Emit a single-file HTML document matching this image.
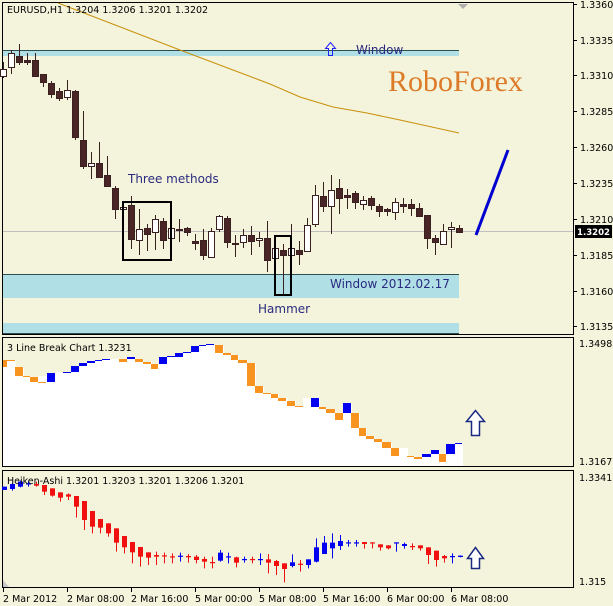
<!DOCTYPE html>
<html><head><meta charset="utf-8"><style>
html,body{margin:0;padding:0;background:#f4f4dc;width:613px;height:606px;overflow:hidden}
svg{display:block}
text{font-family:"DejaVu Sans","Liberation Sans",sans-serif;font-size:10px;fill:#000}
</style></head><body>
<svg id="s" width="613" height="606" viewBox="0 0 613 606" xmlns="http://www.w3.org/2000/svg">
<rect width="613" height="606" fill="#f4f4dc"/>
<rect x="2.5" y="2.5" width="571" height="332" fill="none" stroke="#000"/>
<rect x="2.5" y="337.5" width="571" height="129" fill="none" stroke="#000"/>
<rect x="2.5" y="470.5" width="571" height="117" fill="none" stroke="#000"/>
<rect x="3" y="50" width="456" height="6" fill="#b0dfe5"/><line x1="3" y1="50.5" x2="459" y2="50.5" stroke="#2f4f4f"/>
<rect x="3" y="274" width="456" height="24" fill="#b0dfe5"/><line x1="3" y1="274.5" x2="459" y2="274.5" stroke="#2f4f4f"/>
<rect x="3" y="323" width="456" height="10" fill="#b0dfe5"/><line x1="3" y1="333.5" x2="459" y2="333.5" stroke="#2f4f4f"/>
<line x1="3" y1="231.5" x2="573" y2="231.5" stroke="#c0c0c0"/>
<polyline points="58,3 180,50 233,70 270,84 300,97 333,107 367,113 400,120 459,133" fill="none" stroke="#c8900a" stroke-width="1"/>
<polygon points="458,4 468,4 463,9" fill="#b0b0b0"/>
<g id="candles"></g>
<line x1="476" y1="235" x2="508" y2="150" stroke="#0000d0" stroke-width="3"/>
<rect x="123" y="202" width="48" height="58" fill="none" stroke="#000" stroke-width="2"/>
<rect x="275" y="236" width="16" height="59" fill="none" stroke="#000" stroke-width="2"/>
<text x="7" y="13" style="font-size:9.5px">EURUSD,H1  1.3204 1.3206 1.3201 1.3202</text>
<text x="128" y="183" style="font-size:12px;fill:#2a2a80">Three methods</text>
<text x="258" y="313" style="font-size:12px;fill:#2a2a80">Hammer</text>
<text x="356" y="54" style="font-size:12px;fill:#2a2a80">Window</text>
<text x="330" y="288" style="font-size:12px;fill:#2a2a80">Window 2012.02.17</text>
<path d="M330.5,42.5 L325.5,48.5 L328.5,48.5 L328.5,55.5 L332.5,55.5 L332.5,48.5 L335.5,48.5 Z" fill="none" stroke="#2020ff"/>
<text x="388" y="91" style="font-family:'Liberation Serif',serif;font-size:30px;fill:#dc7a28">RoboForex</text>
<g id="axis"></g>
<rect x="575" y="225" width="37" height="13" fill="#000"/>
<text x="577" y="235" style="fill:#fff;font-weight:bold;font-size:9px" textLength="33" lengthAdjust="spacingAndGlyphs">1.3202</text>
<g id="lb" shape-rendering="crispEdges"></g>
<text x="7" y="351" style="font-size:9.5px">3 Line Break Chart 1.3231</text>
<path d="M475.5,410.5 L466.5,421.5 L471.5,421.5 L471.5,435.5 L479.5,435.5 L479.5,421.5 L484.5,421.5 Z" fill="#fff" stroke="#1a2a80" stroke-width="1.5"/>
<text x="579" y="347" style="font-size:9.5px">1.3498</text>
<text x="579" y="465" style="font-size:9.5px">1.3167</text>
<g id="ha"></g>
<text x="7" y="484" style="font-size:9.5px">Heiken-Ashi 1.3201 1.3203 1.3201 1.3206 1.3201</text>
<path d="M475.5,547.5 L467.5,558.5 L471.5,558.5 L471.5,568.5 L479.5,568.5 L479.5,558.5 L483.5,558.5 Z" fill="#fff" stroke="#1a2a80" stroke-width="1.5"/>
<text x="579" y="481" style="font-size:9.5px">1.3341</text>
<text x="579" y="585" style="font-size:9.5px">1.315</text>
<polygon points="3,580 3,587 9,587" fill="#c8c8c8"/>
<g id="dates"></g>
</svg>
<script>
var NS="http://www.w3.org/2000/svg";
function add(g,tag,a){var e=document.createElementNS(NS,tag);for(var k in a)e.setAttribute(k,a[k]);g.appendChild(e);return e;}
var C=document.getElementById("candles");
var cd=[[3,69,76,62,78,0],[11,53,67,50,74,0],[19,56,62,44,65,1],[27,60,62,53,65,1],[35,60,76,53,76,1],[43,74,82,74,87,1],[51,83,94,81,98,1],[59,91,98,88,101,1],[67,90,97,80,100,0],[75,91,137,90,140,1],[83,140,166,111,169,1],[91,163,166,152,179,0],[99,163,177,142,177,1],[107,175,186,156,186,1],[115,188,209,186,219,1],[123,207,209,206,210,0],[131,205,239,196,249,1],[139,229,240,209,255,0],[147,228,234,224,251,1],[155,219,232,215,250,0],[163,221,240,218,249,1],[171,228,238,226,243,0],[179,229,230,219,242,1],[187,228,232,227,236,1],[195,241,243,234,250,1],[203,240,255,229,260,1],[211,231,257,228,257,0],[219,216,229,215,232,0],[227,218,242,216,248,1],[235,243,244,235,257,1],[243,235,242,229,248,0],[251,235,241,226,255,1],[259,238,240,232,247,0],[267,238,260,221,272,1],[275,248,258,246,260,0],[283,250,255,244,295,1],[291,248,255,224,260,0],[299,250,254,241,265,1],[307,225,251,218,252,0],[315,195,224,185,227,0],[323,196,206,182,212,1],[331,190,206,175,234,0],[339,188,198,179,214,1],[347,195,197,189,209,1],[355,193,202,191,209,1],[363,200,204,196,210,0],[371,198,205,196,210,1],[379,206,211,204,217,1],[387,209,211,208,216,1],[395,202,212,198,220,0],[403,204,206,198,213,1],[411,204,208,199,216,1],[419,208,216,203,216,1],[427,215,238,215,249,1],[435,238,242,235,255,1],[443,231,244,224,245,0],[451,227,229,222,248,0],[459,228,232,225,233,1]];
cd.forEach(function(c){add(C,"line",{x1:c[0]+.5,y1:c[3],x2:c[0]+.5,y2:c[4],stroke:"#3a2020"});
add(C,"rect",{x:c[0]-2.5,y:c[1]+.5,width:6,height:Math.max(1,c[2]-c[1]),fill:c[5]?"#4a2525":"#fff",stroke:"#3a2020"});});
var A=document.getElementById("axis");
[["1.3360",4],["1.3335",40],["1.3310",75],["1.3285",111],["1.3260",147],["1.3235",183],["1.3210",219],["1.3185",255],["1.3160",291],["1.3135",326]].forEach(function(t){
add(A,"line",{x1:573,y1:t[1]+.5,x2:577,y2:t[1]+.5,stroke:"#000"});var e=add(A,"text",{x:580,y:t[1]+4,style:"font-size:9.5px"});e.textContent=t[0];});
var L=document.getElementById("lb");
var b=[[3,7,360,367,"o"],[7,15,360,360,"o"],[15,23,367,376,"o"],[23,30,376,376,"o"],[30,38,377,382,"o"],[38,46,382,382,"o"],[47,55,373,382,"b"],[63,71,372,372,"b"],[71,79,366,372,"b"],[79,87,363,366,"b"],[87,95,361,363,"b"],[95,102,360,361,"b"],[102,110,359,359,"b"],[119,127,359,362,"o"],[127,135,357,359,"b"],[135,143,359,362,"o"],[143,151,362,364,"o"],[151,158,364,369,"o"],[159,167,357,364,"b"],[167,175,356,356,"b"],[175,183,353,357,"b"],[183,191,352,352,"b"],[191,199,346,352,"b"],[199,206,345,345,"b"],[206,214,344,344,"b"],[215,223,345,353,"o"],[223,231,353,355,"o"],[231,238,355,360,"o"],[238,247,360,363,"o"],[247,255,363,386,"o"],[255,263,386,393,"o"],[263,271,393,394,"o"],[271,278,394,398,"o"],[278,286,398,401,"o"],[287,295,401,406,"o"],[295,303,406,407,"o"],[311,319,398,407,"b"],[319,326,407,409,"o"],[326,335,409,413,"o"],[335,343,413,420,"o"],[343,351,403,413,"b"],[351,359,413,428,"o"],[359,366,428,436,"o"],[366,374,436,439,"o"],[374,382,439,442,"o"],[382,391,442,448,"o"],[391,399,448,456,"o"],[407,414,456,456,"o"],[414,422,457,459,"o"],[422,431,454,457,"b"],[431,439,450,454,"b"],[439,446,454,462,"o"],[446,455,444,454,"b"],[455,462,443,443,"b"]];
var gaps=[[102,119,359],[303,311,398],[399,407,448],[38,47,376],[55,63,372],[46,47,376],[110,119,359],[286,287,398]];
b.forEach(function(r){add(L,"rect",{x:r[0],y:r[2],width:r[1]-r[0]+1,height:466-r[2],fill:"#fff"});});
gaps.forEach(function(g){add(L,"rect",{x:g[0],y:g[2],width:g[1]-g[0]+1,height:466-g[2],fill:"#fff"});});
b.forEach(function(r){add(L,"rect",{x:r[0],y:r[2],width:r[1]-r[0],height:Math.max(1.2,r[3]-r[2]),fill:r[4]=="o"?"#f7931e":"#0000f0"});});
var H=document.getElementById("ha");
var ha=[[470,480,470,480,1],[462,477,460,482,1],[455,470,452,472,1],[460,461,455,470,1],[462,467,455,470,0],[465,485,465,495,0],[475,497,475,500,0],[487,503,487,515,0],[493,500,490,510,0],[498,530,498,563,0],[513,570,513,600,0],[543,590,543,610,0],[567,593,567,610,0],[580,610,580,620,0],[595,638,595,665,0],[618,652,618,670,0],[636,667,636,700,0],[651,680,651,710,0],[667,683,667,705,0],[675,680,665,705,0],[676,679,668,700,0],[679,682,670,700,0],[677,680,668,695,1],[678,682,672,698,0],[680,690,675,700,0],[687,695,680,715,0],[696,698,680,715,0],[668,692,660,695,1],[679,682,668,700,1],[682,698,680,712,0],[687,690,680,698,1],[687,690,680,700,0],[687,690,670,705,1],[688,698,672,730,0],[693,708,690,735,0],[700,717,700,757,0],[697,708,673,712,1],[701,704,690,725,0],[688,705,688,715,1],[652,695,625,697,1],[638,672,618,672,1],[638,655,610,685,1],[633,648,615,660,1],[637,640,630,650,1],[637,640,630,650,1],[636,642,636,656,0],[637,640,637,655,0],[643,652,643,662,0],[646,655,646,658,0],[637,640,637,665,1],[642,648,638,656,1],[648,650,640,660,0],[646,655,646,662,0],[652,675,652,702,0],[662,690,662,710,0],[678,685,675,698,0],[678,681,670,700,1],[677,681,676,682,1]];
ha.forEach(function(h,i){var x=4+8*i,f=function(v){return v/3+330;};var col=h[4]?"#0000f0":"#f01010";
add(H,"line",{x1:x+.5,y1:f(h[2]),x2:x+.5,y2:f(h[3]),stroke:col});
add(H,"rect",{x:x-2,y:f(h[0]),width:5,height:Math.max(1.2,f(h[1])-f(h[0])),fill:col});});
var D=document.getElementById("dates");
[["2 Mar 2012",3],["2 Mar 08:00",67],["2 Mar 16:00",131],["5 Mar 00:00",195],["5 Mar 08:00",259],["5 Mar 16:00",323],["6 Mar 00:00",387],["6 Mar 08:00",451]].forEach(function(d){
add(D,"line",{x1:d[1]+.5,y1:588,x2:d[1]+.5,y2:592,stroke:"#000"});var e=add(D,"text",{x:d[1],y:602,style:"font-size:9.5px"});e.textContent=d[0];});
</script>
</body></html>
